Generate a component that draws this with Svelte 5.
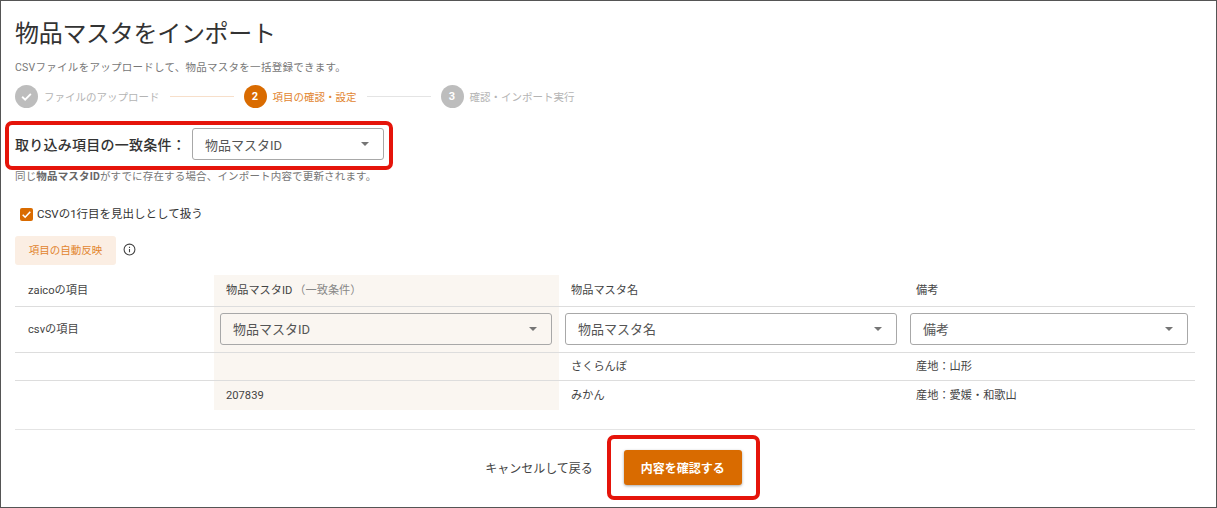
<script>
	const columns = [
		{ name: '物品マスタID', note: '（一致条件）', value: '物品マスタID', cells: ['', '207839'], key: true },
		{ name: '物品マスタ名', value: '物品マスタ名', cells: ['さくらんぼ', 'みかん'] },
		{ name: '備考', value: '備考', cells: ['産地：山形', '産地：愛媛・和歌山'] }
	];
</script>

<div class="page">
	<h1 class="title">物品マスタをインポート</h1>
	<p class="lead">CSVファイルをアップロードして、物品マスタを一括登録できます。</p>

	<ol class="steps">
		<li class="step">
			<span class="dot">
				<svg width="13" height="13" viewBox="0 0 24 24" fill="none" stroke="#fff" stroke-width="3.4">
					<path d="M4 12.5l5.5 5.5L20 7" />
				</svg>
			</span>
			<span class="step-label">ファイルのアップロード</span>
		</li>
		<li class="bar bar-done"></li>
		<li class="step active">
			<span class="dot">2</span>
			<span class="step-label">項目の確認・設定</span>
		</li>
		<li class="bar"></li>
		<li class="step">
			<span class="dot">3</span>
			<span class="step-label">確認・インポート実行</span>
		</li>
	</ol>

	<div class="match-row">
		<span class="match-label">取り込み項目の一致条件：</span>
		<div class="select match-select">
			<span>物品マスタID</span>
			<i class="caret"></i>
		</div>
	</div>
	<p class="hint">同じ<b>物品マスタID</b>がすでに存在する場合、インポート内容で更新されます。</p>

	<label class="check">
		<span class="box">
			<svg width="13" height="13" viewBox="0 0 24 24" fill="none" stroke="#fff" stroke-width="3">
				<path d="M5 12.5l4.5 4.5L19 7" />
			</svg>
		</span>
		CSVの1行目を見出しとして扱う
	</label>

	<div class="auto-row">
		<button class="auto">項目の自動反映</button>
		<svg class="info" width="13" height="13" viewBox="0 0 24 24" fill="none" stroke="#444" stroke-width="2">
			<circle cx="12" cy="12" r="10" />
			<path d="M12 11v6M12 7v2" />
		</svg>
	</div>

	<div class="table">
		<div class="cell head first">zaicoの項目</div>
		{#each columns as col}
			<div class="cell head" class:key={col.key}>
				{col.name}{#if col.note}<span class="note">{col.note}</span>{/if}
			</div>
		{/each}

		<div class="cell pick first">csvの項目</div>
		{#each columns as col}
			<div class="cell pick" class:key={col.key}>
				<div class="select" class:on-key={col.key}>
					<span>{col.value}</span>
					<i class="caret"></i>
				</div>
			</div>
		{/each}

		{#each [0, 1] as row}
			<div class="cell data first"></div>
			{#each columns as col}
				<div class="cell data" class:key={col.key}>{col.cells[row]}</div>
			{/each}
		{/each}
	</div>

	<div class="actions">
		<a class="cancel" href="#top">キャンセルして戻る</a>
		<button class="confirm">内容を確認する</button>
	</div>

	<!-- red annotation frames on top of the screenshot -->
	<div class="mark mark-match"></div>
	<div class="mark mark-confirm"></div>
</div>

<style>
	:global(body) {
		margin: 0;
		background: #fff;
	}

	.page {
		position: relative;
		box-sizing: border-box;
		width: 1217px;
		height: 508px;
		padding: 19px 21px 0 14px;
		border: 1px solid #555;
		overflow: hidden;
		color: #333;
		font-family: Roboto, 'Noto Sans CJK JP', sans-serif;
	}

	.title {
		margin: 0;
		font-size: 24px;
		font-weight: 400;
		line-height: 28px;
		letter-spacing: -0.3px;
	}

	.lead {
		margin: 12px 0 0;
		font-size: 10.5px;
		line-height: 16px;
		color: #777;
		letter-spacing: 0.27px;
	}

	.steps {
		display: flex;
		align-items: center;
		gap: 10px;
		margin: 8px 0 0;
		padding: 0;
		height: 24px;
		list-style: none;
	}

	.step {
		display: flex;
		align-items: center;
		gap: 6px;
		font-size: 10.5px;
		color: #b4b4b4;
	}

	.dot {
		display: flex;
		align-items: center;
		justify-content: center;
		width: 23px;
		height: 23px;
		border-radius: 50%;
		background: #bdbdbd;
		color: #fff;
		font-size: 11px;
		font-weight: 700;
	}

	.step.active {
		color: #e2852f;
	}

	.step.active .dot {
		background: #d96b00;
	}

	.bar {
		width: 64px;
		height: 1px;
		background: #e4e4e4;
	}

	.bar-done {
		background: #f7dfca;
	}

	.match-row {
		display: flex;
		align-items: center;
		gap: 12px;
		margin-top: 20px;
	}

	.match-label {
		width: 165px;
		font-size: 14px;
		font-weight: 500;
		letter-spacing: 0.25px;
		white-space: nowrap;
	}

	.select {
		flex: 1;
		box-sizing: border-box;
		display: flex;
		align-items: center;
		justify-content: space-between;
		height: 32px;
		padding: 0 14px 0 12px;
		border: 1px solid #a8a8a8;
		border-radius: 3px;
		background: #fff;
		font-size: 13px;
		color: #555;
	}

	.match-select {
		flex: none;
		width: 192px;
	}

	.select.on-key {
		background: #faf6f1;
	}

	.caret {
		width: 0;
		height: 0;
		border-left: 4px solid transparent;
		border-right: 4px solid transparent;
		border-top: 4px solid #757575;
	}

	.hint {
		margin: 9px 0 0;
		font-size: 10.5px;
		line-height: 16px;
		color: #777;
		letter-spacing: 0.17px;
	}

	.hint b {
		font-weight: 700;
		color: #666;
	}

	.check {
		display: flex;
		align-items: center;
		gap: 4px;
		margin: 21px 0 0 5px;
		font-size: 11.5px;
		line-height: 16px;
	}

	.box {
		display: flex;
		align-items: center;
		justify-content: center;
		width: 13px;
		height: 13px;
		border-radius: 2px;
		background: #d96b00;
	}

	.auto-row {
		display: flex;
		align-items: center;
		gap: 7px;
		margin-top: 14px;
	}

	.auto {
		width: 101px;
		height: 29px;
		padding: 0 0 2px;
		border: 0;
		border-radius: 3px;
		background: #fbeee3;
		color: #e2852f;
		font: inherit;
		font-size: 10.5px;
	}

	.info {
		margin-bottom: 2px;
	}

	.table {
		display: grid;
		grid-template-columns: 199px 345px 345px 291px;
		grid-template-rows: 32px 46px 28px 29px;
		margin-top: 10px;
		padding-bottom: 19px;
		border-bottom: 1px solid #e4e4e4;
	}

	.cell {
		box-sizing: border-box;
		display: flex;
		align-items: center;
		padding: 0 12px 3px;
		font-size: 11.2px;
		color: #444;
		border-bottom: 1px solid #ddd;
	}

	.cell.first {
		padding-left: 13px;
	}

	.cell.key {
		background: #faf6f1;
	}

	.cell.pick {
		padding: 0 7px 2px 6px;
	}

	.cell.pick.first {
		padding: 0 0 3px 13px;
	}

	.cell.data.key {
		padding-bottom: 1px;
	}

	.cell.data:nth-last-child(-n + 4) {
		border-bottom: 0;
	}

	.note {
		margin-left: 2px;
		color: #888;
	}

	.actions {
		display: flex;
		align-items: center;
		justify-content: center;
		gap: 31px;
		height: 75px;
		padding-left: 17px;
	}

	.cancel {
		color: #444;
		font-size: 12px;
		text-decoration: none;
	}

	.confirm {
		width: 118px;
		height: 35px;
		border: 0;
		border-radius: 3px;
		background: #d96b00;
		color: #fff;
		font: inherit;
		font-size: 12px;
		font-weight: 700;
		box-shadow: 0 1px 3px rgba(0, 0, 0, 0.35);
	}

	.mark {
		position: absolute;
		box-sizing: border-box;
		border: 4px solid #e5140a;
		border-radius: 7px;
		pointer-events: none;
	}

	.mark-match {
		left: 4px;
		top: 120px;
		width: 388px;
		height: 49px;
	}

	.mark-confirm {
		left: 606px;
		top: 434px;
		width: 153px;
		height: 65px;
	}
</style>
